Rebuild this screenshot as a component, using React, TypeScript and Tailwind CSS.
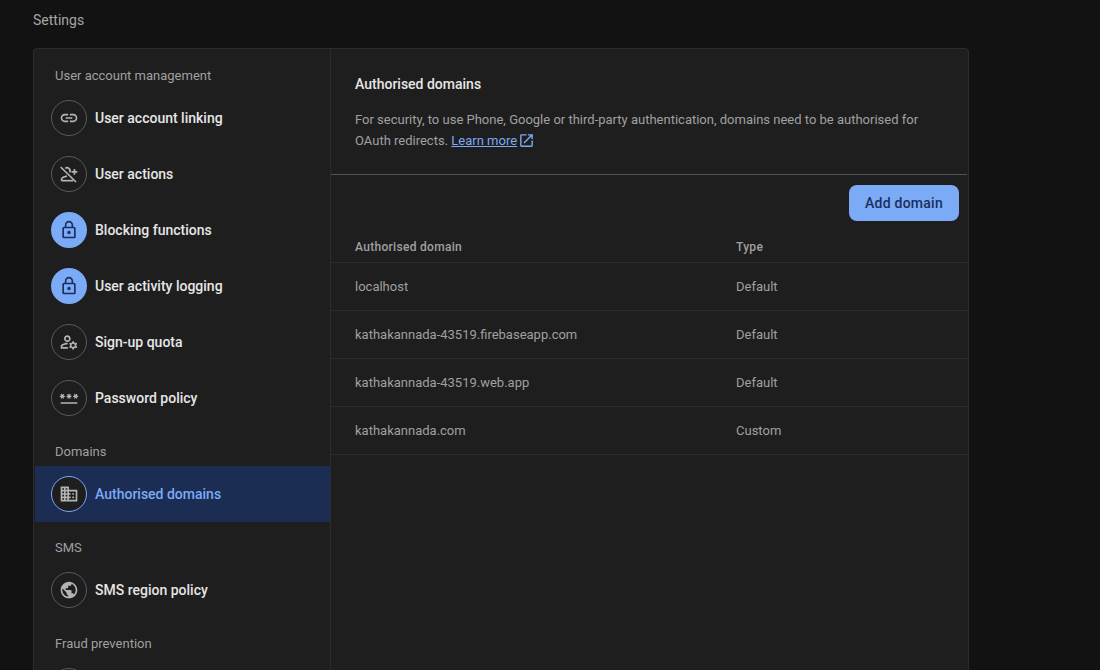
import React from "react";
import {
  MdLink,
  MdLockOutline,
  MdOutlineManageAccounts,
  MdOutlinePassword,
  MdDomain,
  MdPublic,
  MdOpenInNew,
} from "react-icons/md";

type NavItem = {
  label: string;
  icon: React.ElementType;
  locked?: boolean;
  active?: boolean;
};

// plus on the right and slash falling to the right, which the packaged icon doesn't have
function PersonOffIcon({ size }: { size: number }) {
  return (
    <svg width={size} height={size} viewBox="0 0 24 24" fill="none" stroke="currentColor" strokeWidth="2">
      <path d="M2 3.6 20.4 21.6" />
      <path d="M7.5 5.2a3.6 3.6 0 0 1 5.2 4.8" />
      <path d="M3 20v-1c0-2.3 2.6-3.8 6.6-4.4" />
      <path d="M3 20h14" />
      <path d="M18.5 6v7M15 9.5h7" />
    </svg>
  );
}

function NavRow({ item }: { item: NavItem }) {
  const Icon = item.icon;
  let circle = "border border-[#555a62] text-[#b4b4b4]";
  if (item.locked) circle = "bg-[#7baaf7] text-[#1a2f5a]";
  if (item.active) circle = "border border-[#7baaf7] bg-[#1e1e1e] text-[#b4b4b4]";
  return (
    <div
      className={
        item.active
          ? "flex h-14 items-center gap-2 bg-[#1b2d52] pl-4"
          : "flex h-14 items-center gap-2 pl-4"
      }
    >
      <div className={"flex h-9 w-9 shrink-0 items-center justify-center rounded-full " + circle}>
        <Icon size={20} />
      </div>
      <span
        className={
          item.active ? "text-sm font-medium text-[#7baaf7]" : "text-sm font-medium text-[#e6e6e6]"
        }
      >
        {item.label}
      </span>
    </div>
  );
}

function SectionLabel({ text }: { text: string }) {
  return <div className="pl-5 text-[13px] leading-5 text-[#a0a0a0]">{text}</div>;
}

const accountItems: NavItem[] = [
  { label: "User account linking", icon: MdLink },
  { label: "User actions", icon: PersonOffIcon },
  { label: "Blocking functions", icon: MdLockOutline, locked: true },
  { label: "User activity logging", icon: MdLockOutline, locked: true },
  { label: "Sign-up quota", icon: MdOutlineManageAccounts },
  { label: "Password policy", icon: MdOutlinePassword },
];

const domains = [
  { name: "localhost", type: "Default" },
  { name: "kathakannada-43519.firebaseapp.com", type: "Default" },
  { name: "kathakannada-43519.web.app", type: "Default" },
  { name: "kathakannada.com", type: "Custom" },
];

export default function App() {
  return (
    <div className="h-[670px] overflow-hidden bg-[#121212] pl-[33px] font-['Roboto',sans-serif]">
      <div className="h-[48px] pt-[10px] text-sm leading-5 text-[#a6a6a6]">Settings</div>
      <div className="flex h-[800px] w-[936px] rounded-t border border-[#2c2c2c] bg-[#1e1e1e]">
        <div className="w-[297px] shrink-0 border-r border-[#2c2c2c] pt-[17px] pl-px">
          <SectionLabel text="User account management" />
          <div className="mt-[4px]">
            {accountItems.map((item) => (
              <NavRow key={item.label} item={item} />
            ))}
          </div>
          <div className="mt-[16px] mb-[4px]">
            <SectionLabel text="Domains" />
          </div>
          <NavRow item={{ label: "Authorised domains", icon: MdDomain, active: true }} />
          <div className="mt-[16px]">
            <SectionLabel text="SMS" />
          </div>
          <div className="mt-[4px]">
            <NavRow item={{ label: "SMS region policy", icon: MdPublic }} />
          </div>
          <div className="mt-[16px]">
            <SectionLabel text="Fraud prevention" />
          </div>
          <div className="mt-[4px]">
            <NavRow item={{ label: "", icon: MdLockOutline }} />
          </div>
        </div>

        <div className="flex-1">
          <div className="mr-px h-[126px] border-b border-[#50535e] px-6 pt-[25px]">
            <h2 className="text-sm leading-5 font-medium text-[#e6e6e6]">Authorised domains</h2>
            <p className="mt-[15px] w-[580px] text-[13px] leading-[21px] text-[#a0a0a0]">
              For security, to use Phone, Google or third-party authentication, domains need to be
              authorised for OAuth redirects.{" "}
              <a className="text-[#7baaf7] underline">Learn more</a>
              <MdOpenInNew size={17} className="ml-px inline-block align-[-4px] text-[#7baaf7]" />
            </p>
          </div>
          <div className="flex justify-end pt-[10px] pr-[9px]">
            <button className="h-9 w-[110px] rounded-lg bg-[#7baaf7] text-sm font-medium tracking-[0.25px] text-[#1a2f5a]">
              Add domain
            </button>
          </div>
          <div className="mt-[9px] flex h-[33px] items-center border-b border-[#2c2c2c] pt-px text-xs font-medium tracking-[0.3px] text-[#a0a0a0]">
            <div className="w-[405px] pl-6">Authorised domain</div>
            <div>Type</div>
          </div>
          {domains.map((d) => (
            <div
              key={d.name}
              className="flex h-12 items-center border-b border-[#2c2c2c] text-[13px] text-[#a0a0a0]"
            >
              <div className="w-[405px] pl-6">{d.name}</div>
              <div>{d.type}</div>
            </div>
          ))}
        </div>
      </div>
    </div>
  );
}
